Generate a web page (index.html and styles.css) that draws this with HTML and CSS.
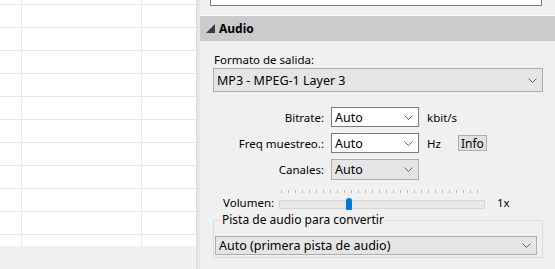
FILE: index.html
```html
<!DOCTYPE html>
<html lang="es">

<head>
    <meta charset="UTF-8">
    <meta name="viewport" content="width=device-width, initial-scale=1.0">
    <title>Audio</title>
    <link rel="stylesheet" href="styles.css">
</head>

<body>
    <div class="app">
        <div class="file-list">
            <div class="grid">
                <div class="grid-inner">
                    <div class="row"><span></span><span></span><span></span></div>
                    <div class="row"><span></span><span></span><span></span></div>
                    <div class="row"><span></span><span></span><span></span></div>
                    <div class="row"><span></span><span></span><span></span></div>
                    <div class="row"><span></span><span></span><span></span></div>
                    <div class="row"><span></span><span></span><span></span></div>
                    <div class="row"><span></span><span></span><span></span></div>
                    <div class="row"><span></span><span></span><span></span></div>
                    <div class="row"><span></span><span></span><span></span></div>
                    <div class="row"><span></span><span></span><span></span></div>
                    <div class="row"><span></span><span></span><span></span></div>
                    <div class="row"><span></span><span></span><span></span></div>
                </div>
            </div>
        </div>
        <div class="splitter"></div>

        <div class="panel">
            <div class="top-box"></div>

            <div class="section-head">
                <svg class="expander" width="9" height="9" viewBox="0 0 9 9">
                    <polygon points="9,0 9,9 0,9" fill="#3a3a3a" />
                </svg>
                <span>Audio</span>
            </div>

            <div class="section-body">
                <div class="field-label">Formato de salida:</div>
                <div class="select select-wide">
                    <span>MP3 - MPEG-1 Layer 3</span>
                    <svg class="chevron" width="9" height="5" viewBox="0 0 9 5">
                        <polyline points="0.5,0.5 4.5,4.5 8.5,0.5" fill="none" stroke="#606060" />
                    </svg>
                </div>

                <div class="form-rows">
                    <div class="form-row">
                        <label class="row-label">Bitrate:</label>
                        <div class="select select-small editable">
                            <span>Auto</span>
                            <svg class="chevron" width="9" height="5" viewBox="0 0 9 5">
                                <polyline points="0.5,0.5 4.5,4.5 8.5,0.5" fill="none" stroke="#606060" />
                            </svg>
                        </div>
                        <span class="unit">kbit/s</span>
                    </div>
                    <div class="form-row">
                        <label class="row-label">Freq muestreo.:</label>
                        <div class="select select-small editable">
                            <span>Auto</span>
                            <svg class="chevron" width="9" height="5" viewBox="0 0 9 5">
                                <polyline points="0.5,0.5 4.5,4.5 8.5,0.5" fill="none" stroke="#606060" />
                            </svg>
                        </div>
                        <span class="unit">Hz</span>
                        <button class="info-btn">Info</button>
                    </div>
                    <div class="form-row">
                        <label class="row-label">Canales:</label>
                        <div class="select select-small tall">
                            <span>Auto</span>
                            <svg class="chevron" width="9" height="5" viewBox="0 0 9 5">
                                <polyline points="0.5,0.5 4.5,4.5 8.5,0.5" fill="none" stroke="#606060" />
                            </svg>
                        </div>
                    </div>
                </div>

                <div class="volume-row">
                    <span class="volume-label">Volumen:</span>
                    <div class="slider">
                        <div class="ticks"></div>
                        <div class="track"></div>
                        <div class="thumb"></div>
                    </div>
                    <span class="volume-value">1x</span>
                </div>

                <fieldset class="track-group">
                    <legend>Pista de audio para convertir</legend>
                    <div class="select select-track">
                        <span>Auto (primera pista de audio)</span>
                        <svg class="chevron" width="9" height="5" viewBox="0 0 9 5">
                            <polyline points="0.5,0.5 4.5,4.5 8.5,0.5" fill="none" stroke="#606060" />
                        </svg>
                    </div>
                </fieldset>
            </div>
        </div>
    </div>
</body>

</html>
```

FILE: styles.css
```css
* {
    box-sizing: border-box;
}

body {
    margin: 0;
    width: 555px;
    height: 269px;
    overflow: hidden;
    font-family: "Noto Sans", "Open Sans", sans-serif;
    font-size: 11.5px;
    color: #000;
    background: #f0f0f0;
}

.app {
    display: flex;
    height: 269px;
}

/* file list on the left */
.file-list {
    width: 196px;
    background: #f0f0f0;
}

.grid {
    height: 246px;
    overflow: hidden;
    background: #fff;
}

.grid-inner {
    margin-top: -18px;
}

.row {
    display: grid;
    grid-template-columns: 22px 120px 1fr;
    height: 23px;
    border-bottom: 1px solid #e8e8e8;
}

.row span {
    border-right: 1px solid #e8e8e8;
}

.row span:last-child {
    border-right: none;
}

.splitter {
    width: 4px;
    background: #e6e6e6;
    border-left: 1px solid #dadada;
}

/* settings panel */
.panel {
    flex: 1;
    display: flex;
    flex-direction: column;
    background: #f0f0f0;
}

.top-box {
    width: 332px;
    height: 6px;
    margin-left: 10px;
    background: #fff;
    border: 1px solid #7a7a7a;
    border-top: none;
}

.section-head {
    display: flex;
    align-items: center;
    gap: 4px;
    height: 26px;
    margin-top: 9px;
    padding-left: 6px;
    background: #cbcbcb;
    border-top: 1px solid #fafafa;
    font-size: 12px;
    font-weight: bold;
}

.section-body {
    padding: 0 12px 0 13px;
}

.field-label {
    line-height: 16px;
    margin-top: 11px;
    padding-left: 1px;
}

.select {
    display: flex;
    align-items: center;
    justify-content: space-between;
    background: #e5e5e5;
    border: 1px solid #adadad;
    padding: 0 5px 0 3px;
}

.select-wide {
    height: 24px;
    font-size: 12.5px;
}

.select-small {
    width: 88px;
    height: 20px;
    font-size: 12.5px;
}

.select-small.tall {
    height: 21px;
}

.select.editable {
    background: #fff;
    border-color: #7a7a7a;
}

.form-rows {
    display: flex;
    flex-direction: column;
    gap: 6px;
    margin-top: 15px;
}

.form-row {
    display: flex;
    align-items: center;
}

.row-label {
    width: 111px;
    margin-right: 7px;
    text-align: right;
}

.unit {
    width: 39px;
    padding-left: 8px;
}

.info-btn {
    height: 16px;
    padding: 0 2px;
    font-family: inherit;
    font-size: 12px;
    line-height: 13px;
    background: #e1e1e1;
    border: 1px solid #adadad;
    border-radius: 0;
}

.volume-row {
    display: flex;
    align-items: center;
    height: 22px;
    margin-top: 9px;
}

.volume-label {
    width: 66px;
    padding-left: 10px;
    padding-top: 5px;
}

.slider {
    position: relative;
    width: 206px;
    height: 22px;
}

.ticks {
    margin: 1px 0 0 2px;
    width: 203px;
    height: 3px;
    background: repeating-linear-gradient(to right, #b8b8b8 0 1px, transparent 1px 7px);
}

.track {
    margin-top: 7px;
    height: 9px;
    background: #e7e7e7;
    border: 1px solid #d6d6d6;
}

.thumb {
    position: absolute;
    left: 67px;
    top: 9px;
    width: 6px;
    height: 12px;
    background: #0078d7;
    border-radius: 3px 3px 1px 1px;
}

.volume-value {
    margin-left: 12px;
    padding-top: 5px;
}

.track-group {
    margin: 1px 0 0;
    padding: 0 5px 2px 1px;
    border: 1px solid #dcdcdc;
}

.track-group legend {
    margin-left: 6px;
    padding: 0 1px;
    line-height: 16px;
    font-size: 12px;
}

.select-track {
    height: 19px;
    margin-top: 8px;
    font-size: 12.5px;
}
```
